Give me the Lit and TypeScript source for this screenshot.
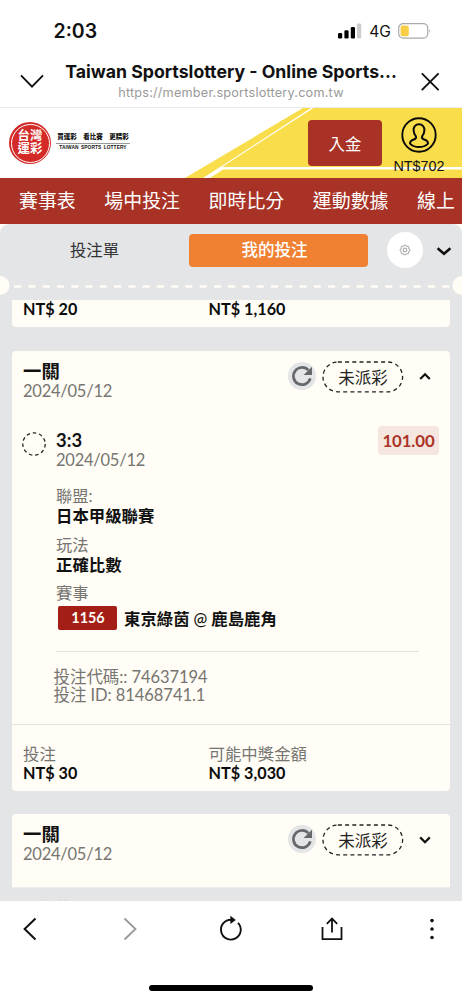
import { LitElement, html, css, svg, nothing } from "lit";
import { customElement, property } from "lit/decorators.js";

@customElement("bet-header")
class BetHeader extends LitElement {
  @property({ type: Boolean }) open = false;

  static styles = css`
    :host { display: flex; padding: 10px 17px 0 11px; height: 62px; box-sizing: border-box; }
    .who { flex: 1; }
    .title { font-size: 18.4px; font-weight: 700; line-height: 20px; height: 20px; color: #111; }
    .date { font-size: 16.5px; line-height: 20px; height: 20px; color: #767572; letter-spacing: -0.24px; }
    .refresh { width: 28px; height: 28px; margin-top: 1px; }
    .status {
      width: 82px; height: 32px; margin-left: 6px; display: flex; align-items: center; justify-content: center;
      font-size: 16.5px; color: #222; position: relative;
    }
    .outline { position: absolute; left: 0; top: 0; }
    .chev { width: 16px; height: 16px; margin: 7px 0 0 13px; }
  `;

  render() {
    return html`
      <div class="who">
        <div class="title">一關</div>
        <div class="date">2024/05/12</div>
      </div>
      <svg class="refresh" viewBox="0 0 28 28">
        <circle cx="14" cy="14" r="14" fill="#e4e5e7" />
        <path d="M20.3 8.2A8.6 8.6 0 1 0 22.3 16.4" fill="none" stroke="#66676a" stroke-width="2.7" />
        <path d="M24 4.8V13H15.6Z" fill="#66676a" />
      </svg>
      <div class="status">
        <svg class="outline" width="82" height="32" viewBox="0 0 82 32">
          <rect x="1" y="1" width="79.6" height="29.8" rx="14.9" fill="none" stroke="#222" stroke-width="1.3" stroke-dasharray="4 3.2" />
        </svg>
        <span>未派彩</span>
      </div>
      <svg class="chev" viewBox="0 0 16 16">
        <path d=${this.open ? "M3.2 11 8 6.2 12.8 11" : "M3.2 6.4 8 11.2 12.8 6.4"} fill="none" stroke="#111" stroke-width="2.2" />
      </svg>
    `;
  }
}

@customElement("bet-totals")
class BetTotals extends LitElement {
  @property() stake = "";
  @property() payout = "";
  @property({ type: Boolean }) labelled = false;

  static styles = css`
    :host { display: grid; grid-template-columns: 185.6px 1fr; padding-left: 11px; }
    .label { font-size: 16.4px; line-height: 18px; height: 19px; color: #767572; }
    .sum { font-size: 16.2px; font-weight: 700; line-height: 18px; height: 18px; color: #0c0c0c; }
  `;

  render() {
    const cell = (label: string, sum: string) => html`
      <div>
        ${this.labelled ? html`<div class="label">${label}</div>` : nothing}
        <div class="sum">NT$ ${sum}</div>
      </div>`;
    return html`${cell("投注", this.stake)}${cell("可能中獎金額", this.payout)}`;
  }
}

@customElement("app-root")
class AppRoot extends LitElement {
  static styles = css`
    :host {
      display: flex; flex-direction: column; width: 462px; height: 1000px; overflow: hidden; background: #fff;
      font-family: Lato, "Noto Sans CJK TC", sans-serif; color: #111;
    }
    * { box-sizing: border-box; }
    .status-bar {
      height: 56px; padding: 6px 30px 0 53.5px; display: flex; align-items: center; font-family: Inter, sans-serif;
    }
    .clock { flex: 1; font-size: 19.5px; font-weight: 600; line-height: 24px; }
    .bars { width: 24px; height: 16px; }
    .net { font-size: 15.6px; margin: 1px 7px 0 7px; line-height: 20px; }
    .browser {
      height: 52px; border-bottom: 1px solid #eaeaea; display: flex; padding: 0 20px; font-family: Inter, sans-serif;
    }
    .browser svg { width: 24px; height: 24px; margin-top: 14px; }
    .page-name { flex: 1; text-align: center; white-space: nowrap; display: flex; flex-direction: column; align-items: center; }
    .page-title { font-size: 17.7px; font-weight: 700; line-height: 20px; margin-top: 6px; }
    .page-url { font-size: 12.7px; color: #9a9a9a; line-height: 16px; margin-top: 2.6px; letter-spacing: 0.2px; }
    .banner { height: 70px; display: grid; }
    .banner > * { grid-area: 1 / 1; }
    .banner-art { width: 462px; height: 70px; }
    .banner-row { display: flex; padding-left: 9px; }
    .seal { 
      width: 42px; height: 42px; border-radius: 50%; background: #d42a27; margin-top: 14px; color: #fff; padding: 1.5px;
    }
    .seal-ring {
      height: 39px; border: 1px solid #fff; border-radius: 50%; display: flex; flex-direction: column;
      align-items: center; justify-content: center; font-size: 12.4px; line-height: 12.6px; font-weight: 700;
    }
    .slogan { width: 74px; margin: 22px 0 0 5px; display: flex; flex-direction: column; align-items: center; white-space: nowrap; }
    .slogan-zh { font-size: 6.5px; font-weight: 900; line-height: 13px; height: 14px; display: flex; gap: 6.6px; align-self: stretch; justify-content: center; border-bottom: 1px solid #999; }
    .slogan-en { font: 700 4.8px/8px "Liberation Sans", sans-serif; margin-top: 0.4px; letter-spacing: 0.1px; word-spacing: 1px; }
    .deposit {
      width: 74px; height: 46px; margin: 12px 0 0 178px; background: #a73225; color: #fff; border-radius: 4px;
      display: flex; align-items: center; justify-content: center; font-size: 16.4px;
    }
    .account { width: 60px; margin: 8px 0 0 7px; display: flex; flex-direction: column; align-items: center; }
    .account svg { width: 38px; height: 38px; }
    .balance { font: 14.4px/16px "Liberation Sans", sans-serif; margin-top: 3.5px; letter-spacing: 0; }
    .nav {
      height: 46px; background: #a73225; color: #fff; display: flex; gap: 28.7px; padding-left: 19px;
      font-size: 18.9px; line-height: 45px; white-space: nowrap;
    }
    .content { height: 677px; background: #fffdf5; overflow: hidden; }
    .panel { height: 677px; background: #e4e5e7; border-radius: 9px 9px 0 0; display: flex; flex-direction: column; }
    .tabs { height: 53px; flex: none; padding: 8px 8px 0 0; display: flex; }
    .tab { width: 189px; font-size: 16.4px; line-height: 35px; text-align: center; color: #333; }
    .tab-on { width: 179px; height: 33px; margin-top: 2px; background: #f08132; color: #fff; border-radius: 4px; font-size: 16.5px; line-height: 33px; text-align: center; padding-right: 8px; font-weight: 500; }
    .gear { width: 36px; height: 36px; margin-left: 19px; }
    .fold { width: 20px; height: 20px; margin: 9px 0 0 11px; }
    .perforation { display: block; width: 462px; height: 19px; flex: none; margin-top: -1px; }
    .card { margin: 0 12px; background: #fffdf5; border-radius: 4px; flex: none; }
    .card-cut { height: 27px; margin-top: 5px; border-radius: 0 0 4px 4px; }
    .card-open { height: 440px; margin-top: 24px; }
    .card-last { height: 74px; margin-top: 23px; border-radius: 4px 4px 0 0; border-bottom: 1px solid #eeeded; }
    .leg { display: flex; padding: 18px 11px 0 10px; }
    .leg-mark { width: 24px; height: 24px; margin: 1px 10px 0 0; }
    .leg-body { flex: 1; }
    .pick { font-size: 18.4px; font-weight: 700; line-height: 19px; height: 19px; }
    .when { font-size: 16.5px; line-height: 20px; height: 20px; color: #767572; letter-spacing: -0.24px; }
    .odds {
      width: 61px; height: 29px; margin-top: -5px; background: #f5e7e0; color: #ab3427; border-radius: 4px;
      font-size: 16.8px; font-weight: 700; line-height: 30px; text-align: center; letter-spacing: -0.1px;
    }
    .details { margin-left: 44px; padding-top: 16px; width: 363px; border-bottom: 1px solid #e5e2dc; height: 182px; }
    .term { font-size: 16.3px; line-height: 20px; height: 20px; color: #767572; }
    .value { font-size: 16.4px; font-weight: 700; line-height: 20px; height: 20px; margin-bottom: 8.5px; }
    .match { display: flex; align-items: center; gap: 7px; height: 24px; margin: 3px 0 0 2px; font-size: 16.4px; font-weight: 700; white-space: nowrap; }
    .match-no { width: 59px; height: 24px; background: #a51e15; color: #fffdf5; border-radius: 2px; font-size: 14.4px; line-height: 24px; text-align: center; padding-left: 1px; }
    .at { font-weight: 500; }
    .codes { margin-left: 41.5px; padding-top: 16px; height: 71.5px; font-size: 16.5px; line-height: 18px; color: #767572; }
    .code { height: 18px; letter-spacing: -0.06px; }
    .totals { border-top: 1px solid #e5e2dc; padding-top: 20.5px; }
    .under { margin: 10px 0 0 11px; height: 3px; overflow: hidden; color: #cfd0d2; font-size: 15px; line-height: 19px; }
    .toolbar { height: 56px; display: flex; justify-content: space-between; align-items: center; padding: 0 16px; }
    .toolbar svg { width: 28px; height: 28px; }
    .home { width: 164px; height: 6px; border-radius: 3px; background: #000; margin: 27.5px auto 0; }
  `;

  private nav = ["賽事表", "場中投注", "即時比分", "運動數據", "線上"];

  private dashes() {
    return Array.from({ length: 31 }, (_, i) => svg`<rect x=${14 + i * 14.27} y="9.2" width="7.4" height="2.6" rx="1" fill="#fffdf5"/>`);
  }

  private gearOutline() {
    const points = Array.from({ length: 64 }, (_, i) => {
      const angle = (i / 64) * Math.PI * 2;
      const radius = 4.5 + 0.5 * Math.tanh(2.5 * Math.cos(8 * angle));
      return `${(18 + radius * Math.cos(angle)).toFixed(2)},${(18 + radius * Math.sin(angle)).toFixed(2)}`;
    });
    return svg`<polygon points=${points.join(" ")} fill="none" stroke="#777" stroke-width=".75" stroke-linejoin="round"/>`;
  }

  render() {
    return html`
      <div class="status-bar">
        <div class="clock">2:03</div>
        <svg class="bars" viewBox="0 0 24 16">
          <rect x="0" y="10" width="4.2" height="5.5" rx="1.3" />
          <rect x="6.4" y="7.3" width="4.2" height="8.2" rx="1.3" />
          <rect x="12.8" y="4" width="4.2" height="11.5" rx="1.3" />
          <rect x="19" y="0.6" width="4.2" height="14.9" rx="1.3" fill="#ccc" />
        </svg>
        <div class="net">4G</div>
        <svg width="34" height="16" viewBox="0 0 34 16">
          <rect x="0.7" y="0.7" width="29" height="14.4" rx="4.4" fill="none" stroke="#aaa" stroke-width="1.2" />
          <rect x="2.6" y="2.6" width="8.2" height="10.6" rx="2" fill="#f7ce46" />
          <path d="M31.3 5.6q1.8 2.3 0 4.6Z" fill="#aaa" />
        </svg>
      </div>
      <div class="browser">
        <svg viewBox="0 0 24 24"><path d="M1 5.4 12 16.6 23 5.4" fill="none" stroke="#111" stroke-width="1.9" /></svg>
        <div class="page-name">
          <div class="page-title">Taiwan Sportslottery - Online Sports...</div>
          <div class="page-url">https://member.sportslottery.com.tw</div>
        </div>
        <svg viewBox="0 0 24 24"><path d="M3.8 3.4 20.6 20.2M20.6 3.4 3.8 20.2" fill="none" stroke="#111" stroke-width="1.9" /></svg>
      </div>

      <div class="banner">
        <svg class="banner-art" viewBox="0 0 462 70">
          <path d="M303 0H311L203 70H185ZM313.5 0H462V59H222ZM223 61.5H462V70H210Z" fill="#f9dd4b" />
        </svg>
        <div class="banner-row">
          <div class="seal"><div class="seal-ring"><span>台灣</span><span>運彩</span></div></div>
          <div class="slogan">
            <div class="slogan-zh"><span>買運彩</span><span>看比賽</span><span>更精彩</span></div>
            <div class="slogan-en">TAIWAN SPORTS LOTTERY</div>
          </div>
          <div class="deposit">入金</div>
          <div class="account">
            <svg viewBox="0 0 38 38" fill="none" stroke="#0a0a0a">
              <circle cx="19" cy="19" r="16.7" stroke-width="1.9" />
              <path d="M19 8.3c-3.6 0-5.6 2.7-5.4 6 .1 2.5 1 4.5 2.3 6 .5 1.7-.4 2.7-2 3.2-2.7.8-3.9 2-3.9 4.1 2.5 2.5 5.6 3.5 9 3.5s6.5-1 9-3.5c0-2.1-1.2-3.3-3.9-4.1-1.6-.5-2.5-1.5-2-3.2 1.3-1.5 2.2-3.5 2.3-6 .2-3.3-1.8-6-5.4-6Z" stroke-width="2" />
            </svg>
            <div class="balance">NT$702</div>
          </div>
        </div>
      </div>

      <div class="nav">${this.nav.map((n) => html`<span>${n}</span>`)}</div>

      <div class="content">
        <div class="panel">
          <div class="tabs">
            <div class="tab">投注單</div>
            <div class="tab-on">我的投注</div>
            <svg class="gear" viewBox="0 0 36 36">
              <circle cx="18" cy="18" r="18" fill="#fff" />
              ${this.gearOutline()}
              <circle cx="18" cy="18" r="1.9" fill="none" stroke="#777" stroke-width=".75" />
            </svg>
            <svg class="fold" viewBox="0 0 20 20"><path d="M3.6 7.2 10 12.8 16.4 7.2" fill="none" stroke="#111" stroke-width="2.5" /></svg>
          </div>
          <svg class="perforation" viewBox="0 0 462 19">
            <circle cx="0" cy="9.5" r="9.5" fill="#fffdf5" />
            <circle cx="462" cy="9.5" r="9.5" fill="#fffdf5" />
            ${this.dashes()}
          </svg>

          <div class="card card-cut"><bet-totals stake="20" payout="1,160"></bet-totals></div>

          <div class="card card-open">
            <bet-header open></bet-header>
            <div class="leg">
              <svg class="leg-mark" viewBox="0 0 24 24"><circle cx="12" cy="12" r="11.2" fill="none" stroke="#222" stroke-width="1.3" stroke-dasharray="3.5 2.9" /></svg>
              <div class="leg-body">
                <div class="pick">3:3</div>
                <div class="when">2024/05/12</div>
              </div>
              <div class="odds">101.00</div>
            </div>
            <div class="details">
              <div class="term">聯盟:</div>
              <div class="value">日本甲級聯賽</div>
              <div class="term">玩法</div>
              <div class="value">正確比數</div>
              <div class="term">賽事</div>
              <div class="match">
                <span class="match-no">1156</span>
                <span>東京綠茵 <span class="at">@</span> 鹿島鹿角</span>
              </div>
            </div>
            <div class="codes">
              <div class="code">投注代碼:: 74637194</div>
              <div class="code">投注 ID: 81468741.1</div>
            </div>
            <div class="totals"><bet-totals labelled stake="30" payout="3,030"></bet-totals></div>
          </div>

          <div class="card card-last"><bet-header></bet-header></div>
          <div class="under">顯示細節</div>
        </div>
      </div>

      <div class="toolbar">
        <svg viewBox="0 0 28 28"><path d="M19.5 3.5 8.6 14 19.5 24.5" fill="none" stroke="#111" stroke-width="2" /></svg>
        <svg viewBox="0 0 28 28"><path d="M7.5 3.5 18.5 14 7.5 24.5" fill="none" stroke="#999" stroke-width="1.8" /></svg>
        <svg viewBox="0 0 28 28">
          <path d="M14.5 4.8A9.9 9.9 0 1 0 21 7.8" fill="none" stroke="#111" stroke-width="1.9" />
          <path d="M13.4 0.8 18.8 4.9 13.4 9Z" fill="#111" />
        </svg>
        <svg viewBox="0 0 28 28" fill="none" stroke="#111" stroke-width="1.8">
          <path d="M4.5 12V24.2H23.5V12M14 17.5V4M8.8 8.8 14 3.6 19.2 8.8" />
        </svg>
        <svg viewBox="0 0 28 28" fill="#111"><circle cx="14" cy="5.6" r="1.8" /><circle cx="14" cy="14" r="1.8" /><circle cx="14" cy="22.5" r="1.8" /></svg>
      </div>
      <div class="home"></div>
    `;
  }
}
